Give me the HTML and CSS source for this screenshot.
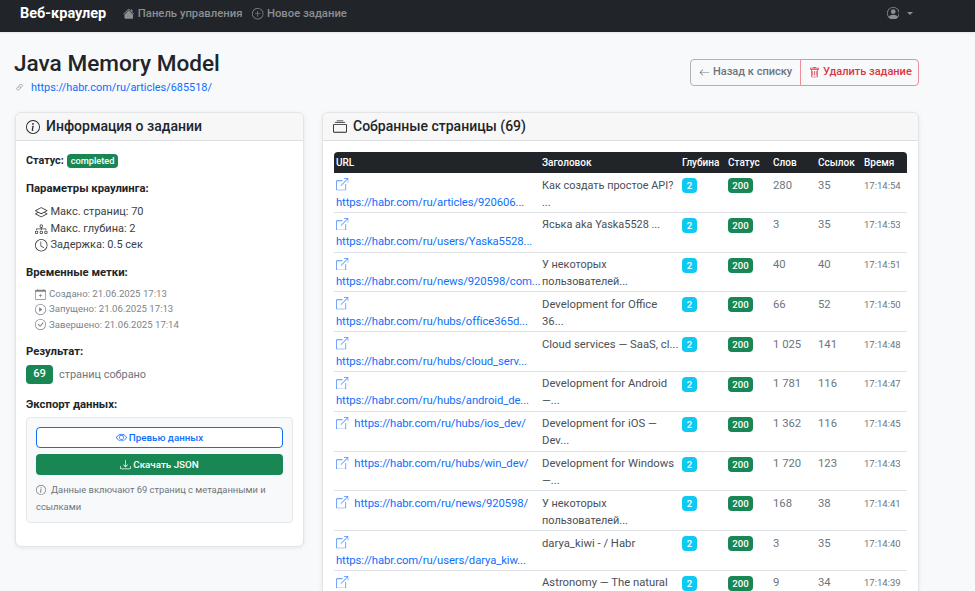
FILE: index.html
```html
<!DOCTYPE html>
<html lang="ru">
<head>
<meta charset="utf-8">
<title>Java Memory Model</title>
<link rel="stylesheet" href="styles.css">
</head>
<body>
<svg class="defs" width="0" height="0">
<symbol id="i-ext" viewBox="0 0 16 16"><path d="M8.636 3.5a.5.5 0 0 0-.5-.5H1.5A1.5 1.5 0 0 0 0 4.5v10A1.5 1.5 0 0 0 1.5 16h10a1.5 1.5 0 0 0 1.5-1.5V7.864a.5.5 0 0 0-1 0V14.5a.5.5 0 0 1-.5.5h-10a.5.5 0 0 1-.5-.5v-10a.5.5 0 0 1 .5-.5h6.636a.5.5 0 0 0 .5-.5z"/><path d="M16 .5a.5.5 0 0 0-.5-.5h-5a.5.5 0 0 0 0 1h3.793L6.146 9.146a.5.5 0 1 0 .708.708L15 1.707V5.5a.5.5 0 0 0 1 0v-5z"/></symbol>
<symbol id="i-info" viewBox="0 0 16 16"><path d="M8 15A7 7 0 1 1 8 1a7 7 0 0 1 0 14zm0 1A8 8 0 1 0 8 0a8 8 0 0 0 0 16z"/><path d="M8.93 6.588l-2.29.287-.082.38.45.083c.294.07.352.176.288.469l-.738 3.468c-.194.897.105 1.319.808 1.319.545 0 1.178-.252 1.465-.598l.088-.416c-.2.176-.492.246-.686.246-.275 0-.375-.193-.304-.533L8.93 6.588zM9 4.5a1 1 0 1 1-2 0 1 1 0 0 1 2 0z"/></symbol>
</svg>

<nav class="navbar">
  <span class="brand">Веб-краулер</span>
  <a class="nav-link"><svg class="ico" viewBox="0 0 16 16"><path d="M8.707 1.5a1 1 0 0 0-1.414 0L.646 8.146a.5.5 0 0 0 .708.708L8 2.207l6.646 6.647a.5.5 0 0 0 .708-.708L13 5.793V2.5a.5.5 0 0 0-.5-.5h-1a.5.5 0 0 0-.5.5v1.293L8.707 1.5Z"/><path d="m8 3.293 6 6V13.5a1.5 1.5 0 0 1-1.5 1.5h-9A1.5 1.5 0 0 1 2 13.5V9.293l6-6Z"/></svg>Панель управления</a>
  <a class="nav-link"><svg class="ico" viewBox="0 0 16 16"><path d="M8 15A7 7 0 1 1 8 1a7 7 0 0 1 0 14zm0 1A8 8 0 1 0 8 0a8 8 0 0 0 0 16z"/><path d="M8 4a.5.5 0 0 1 .5.5v3h3a.5.5 0 0 1 0 1h-3v3a.5.5 0 0 1-1 0v-3h-3a.5.5 0 0 1 0-1h3v-3A.5.5 0 0 1 8 4z"/></svg>Новое задание</a>
  <span class="nav-user"><svg class="ico user-ico" viewBox="0 0 16 16"><path d="M11 6a3 3 0 1 1-6 0 3 3 0 0 1 6 0z"/><path fill-rule="evenodd" d="M0 8a8 8 0 1 1 16 0A8 8 0 0 1 0 8zm8-7a7 7 0 0 0-5.468 11.37C3.242 11.226 4.805 10 8 10s4.757 1.225 5.468 2.37A7 7 0 0 0 8 1z"/></svg><span class="caret"></span></span>
</nav>

<main class="main">
  <header class="page-head">
    <div>
      <h1>Java Memory Model</h1>
      <div class="source"><svg class="ico link-ico" viewBox="0 0 16 16"><path d="M4.715 6.542 3.343 7.914a3 3 0 1 0 4.243 4.243l1.828-1.829A3 3 0 0 0 8.586 5.5L8 6.086a1.002 1.002 0 0 0-.154.199 2 2 0 0 1 .861 3.337L6.88 11.45a2 2 0 1 1-2.83-2.83l.793-.792a4.018 4.018 0 0 1-.128-1.287z"/><path d="M6.586 4.672A3 3 0 0 0 7.414 9.5l.775-.776a2 2 0 0 1-.896-3.346L9.12 3.55a2 2 0 1 1 2.83 2.83l-.793.792c.112.42.155.855.128 1.287l1.372-1.372a3 3 0 1 0-4.243-4.243L6.586 4.672z"/></svg><a class="link">https://habr.com/ru/articles/685518/</a></div>
    </div>
    <div class="btn-group">
      <a class="head-btn back"><svg class="ico" viewBox="0 0 16 16"><path d="M15 8a.5.5 0 0 0-.5-.5H2.707l3.147-3.146a.5.5 0 1 0-.708-.708l-4 4a.5.5 0 0 0 0 .708l4 4a.5.5 0 0 0 .708-.708L2.707 8.5H14.5A.5.5 0 0 0 15 8z"/></svg>Назад к списку</a>
      <a class="head-btn del"><svg class="ico" viewBox="0 0 16 16"><path d="M5.5 5.5A.5.5 0 0 1 6 6v6a.5.5 0 0 1-1 0V6a.5.5 0 0 1 .5-.5zm2.5 0a.5.5 0 0 1 .5.5v6a.5.5 0 0 1-1 0V6a.5.5 0 0 1 .5-.5zm3 .5a.5.5 0 0 0-1 0v6a.5.5 0 0 0 1 0V6z"/><path fill-rule="evenodd" d="M14.5 3a1 1 0 0 1-1 1H13v9a2 2 0 0 1-2 2H5a2 2 0 0 1-2-2V4h-.5a1 1 0 0 1-1-1V2a1 1 0 0 1 1-1H6a1 1 0 0 1 1-1h2a1 1 0 0 1 1 1h3.5a1 1 0 0 1 1 1v1zM4.118 4 4 4.059V13a1 1 0 0 0 1 1h6a1 1 0 0 0 1-1V4.059L11.882 4H4.118zM2.5 3V2h11v1h-11z"/></svg>Удалить задание</a>
    </div>
  </header>

  <div class="columns">
    <section class="card info-card">
      <h2 class="card-header"><svg class="ico h-ico"><use href="#i-info"/></svg>Информация о задании</h2>
      <div class="card-body">
        <p class="status-line"><b>Статус:</b> <span class="pill-completed">completed</span></p>
        <h3 class="label">Параметры краулинга:</h3>
        <ul class="params">
          <li><svg class="ico" viewBox="0 0 16 16"><path d="M8.235 1.559a.5.5 0 0 0-.47 0l-7.5 4a.5.5 0 0 0 0 .882L3.188 8 .264 9.559a.5.5 0 0 0 0 .882l7.5 4a.5.5 0 0 0 .47 0l7.5-4a.5.5 0 0 0 0-.882L12.813 8l2.922-1.559a.5.5 0 0 0 0-.882l-7.5-4zm3.515 7.008L14.438 10 8 13.433 1.562 10 4.25 8.567l3.515 1.874a.5.5 0 0 0 .47 0l3.515-1.874zM8 9.433 1.562 6 8 2.567 14.438 6 8 9.433z"/></svg>Макс. страниц: 70</li>
          <li><svg class="ico" viewBox="0 0 16 16"><path fill-rule="evenodd" d="M6 3.5A1.5 1.5 0 0 1 7.5 2h1A1.5 1.5 0 0 1 10 3.5v1A1.5 1.5 0 0 1 8.5 6v1H14a.5.5 0 0 1 .5.5v1a.5.5 0 0 1-1 0V8h-5v.5a.5.5 0 0 1-1 0V8h-5v.5a.5.5 0 0 1-1 0v-1A.5.5 0 0 1 2 7h5.5V6A1.5 1.5 0 0 1 6 4.5v-1zM8.5 5a.5.5 0 0 0 .5-.5v-1a.5.5 0 0 0-.5-.5h-1a.5.5 0 0 0-.5.5v1a.5.5 0 0 0 .5.5h1zM0 11.5A1.5 1.5 0 0 1 1.5 10h1A1.5 1.5 0 0 1 4 11.5v1A1.5 1.5 0 0 1 2.5 14h-1A1.5 1.5 0 0 1 0 12.5v-1zm1.5-.5a.5.5 0 0 0-.5.5v1a.5.5 0 0 0 .5.5h1a.5.5 0 0 0 .5-.5v-1a.5.5 0 0 0-.5-.5h-1zm4.5.5A1.5 1.5 0 0 1 7.5 10h1a1.5 1.5 0 0 1 1.5 1.5v1A1.5 1.5 0 0 1 8.5 14h-1A1.5 1.5 0 0 1 6 12.5v-1zm1.5-.5a.5.5 0 0 0-.5.5v1a.5.5 0 0 0 .5.5h1a.5.5 0 0 0 .5-.5v-1a.5.5 0 0 0-.5-.5h-1zm4.5.5a1.5 1.5 0 0 1 1.5-1.5h1a1.5 1.5 0 0 1 1.5 1.5v1a1.5 1.5 0 0 1-1.5 1.5h-1a1.5 1.5 0 0 1-1.5-1.5v-1zm1.5-.5a.5.5 0 0 0-.5.5v1a.5.5 0 0 0 .5.5h1a.5.5 0 0 0 .5-.5v-1a.5.5 0 0 0-.5-.5h-1z"/></svg>Макс. глубина: 2</li>
          <li><svg class="ico" viewBox="0 0 16 16"><path d="M8 3.5a.5.5 0 0 0-1 0V9a.5.5 0 0 0 .252.434l3.5 2a.5.5 0 0 0 .496-.868L8 8.71V3.5z"/><path d="M8 16A8 8 0 1 0 8 0a8 8 0 0 0 0 16zm7-8A7 7 0 1 1 1 8a7 7 0 0 1 14 0z"/></svg>Задержка: 0.5 сек</li>
        </ul>
        <h3 class="label">Временные метки:</h3>
        <ul class="times">
          <li><svg class="ico" viewBox="0 0 16 16"><path d="M8 7a.5.5 0 0 1 .5.5V9H10a.5.5 0 0 1 0 1H8.5v1.5a.5.5 0 0 1-1 0V10H6a.5.5 0 0 1 0-1h1.5V7.5A.5.5 0 0 1 8 7z"/><path d="M3.5 0a.5.5 0 0 1 .5.5V1h8V.5a.5.5 0 0 1 1 0V1h1a2 2 0 0 1 2 2v11a2 2 0 0 1-2 2H2a2 2 0 0 1-2-2V3a2 2 0 0 1 2-2h1V.5a.5.5 0 0 1 .5-.5zM1 4v10a1 1 0 0 0 1 1h12a1 1 0 0 0 1-1V4H1z"/></svg>Создано: 21.06.2025 17:13</li>
          <li><svg class="ico" viewBox="0 0 16 16"><path d="M8 15A7 7 0 1 1 8 1a7 7 0 0 1 0 14zm0 1A8 8 0 1 0 8 0a8 8 0 0 0 0 16z"/><path d="M6.271 5.055a.5.5 0 0 1 .52.038l3.5 2.5a.5.5 0 0 1 0 .814l-3.5 2.5A.5.5 0 0 1 6 10.5v-5a.5.5 0 0 1 .271-.445z"/></svg>Запущено: 21.06.2025 17:13</li>
          <li><svg class="ico" viewBox="0 0 16 16"><path d="M8 15A7 7 0 1 1 8 1a7 7 0 0 1 0 14zm0 1A8 8 0 1 0 8 0a8 8 0 0 0 0 16z"/><path d="M10.97 4.97a.235.235 0 0 0-.02.022L7.477 9.417 5.384 7.323a.75.75 0 0 0-1.06 1.06L6.97 11.03a.75.75 0 0 0 1.079-.02l3.992-4.99a.75.75 0 0 0-1.071-1.05z"/></svg>Завершено: 21.06.2025 17:14</li>
        </ul>
        <h3 class="label result-label">Результат:</h3>
        <div class="result"><span class="count">69</span><span class="result-text">страниц собрано</span></div>
        <h3 class="label export-label">Экспорт данных:</h3>
        <div class="export">
          <a class="btn btn-outline"><svg class="ico" viewBox="0 0 16 16"><path d="M16 8s-3-5.5-8-5.5S0 8 0 8s3 5.5 8 5.5S16 8 16 8zM1.173 8a13.133 13.133 0 0 1 1.66-2.043C4.12 4.668 5.88 3.5 8 3.5c2.12 0 3.879 1.168 5.168 2.457A13.133 13.133 0 0 1 14.828 8c-.058.087-.122.183-.195.288-.335.48-.83 1.12-1.465 1.755C11.879 11.332 10.119 12.5 8 12.5c-2.12 0-3.879-1.168-5.168-2.457A13.134 13.134 0 0 1 1.172 8z"/><path d="M8 5.5a2.5 2.5 0 1 0 0 5 2.5 2.5 0 0 0 0-5zM4.5 8a3.5 3.5 0 1 1 7 0 3.5 3.5 0 0 1-7 0z"/></svg>Превью данных</a>
          <a class="btn btn-green"><svg class="ico" viewBox="0 0 16 16"><path d="M.5 9.9a.5.5 0 0 1 .5.5v2.5a1 1 0 0 0 1 1h12a1 1 0 0 0 1-1v-2.5a.5.5 0 0 1 1 0v2.5a2 2 0 0 1-2 2H2a2 2 0 0 1-2-2v-2.5a.5.5 0 0 1 .5-.5z"/><path d="M7.646 11.854a.5.5 0 0 0 .708 0l3-3a.5.5 0 0 0-.708-.708L8.5 10.293V1.5a.5.5 0 0 0-1 0v8.793L5.354 8.146a.5.5 0 1 0-.708.708l3 3z"/></svg>Скачать JSON</a>
          <p class="note"><svg class="ico note-ico"><use href="#i-info"/></svg>Данные включают 69 страниц с метаданными и ссылками</p>
        </div>
      </div>
    </section>

    <section class="card pages-card">
      <h2 class="card-header"><svg class="ico h-ico" viewBox="0 0 16 16"><path fill-rule="evenodd" d="M2.5 3.5a.5.5 0 0 1 0-1h11a.5.5 0 0 1 0 1h-11zm2-2a.5.5 0 0 1 0-1h7a.5.5 0 0 1 0 1h-7zM0 13a1.5 1.5 0 0 0 1.5 1.5h13A1.5 1.5 0 0 0 16 13V6a1.5 1.5 0 0 0-1.5-1.5h-13A1.5 1.5 0 0 0 0 6v7zm1.5.5A.5.5 0 0 1 1 13V6a.5.5 0 0 1 .5-.5h13a.5.5 0 0 1 .5.5v7a.5.5 0 0 1-.5.5h-13z"/></svg>Собранные страницы (69)</h2>
      <div class="card-body table-body">
        <table class="pages">
          <colgroup><col class="c-url"><col class="c-title"><col class="c-depth"><col class="c-status"><col class="c-words"><col class="c-links"><col class="c-time"></colgroup>
          <thead><tr><th>URL</th><th>Заголовок</th><th>Глубина</th><th>Статус</th><th>Слов</th><th>Ссылок</th><th>Время</th></tr></thead>
          <tbody>
            <tr><td><svg class="ico ext"><use href="#i-ext"/></svg> <a class="link url">https://habr.com/ru/articles/920606...</a></td><td class="cy">Как создать простое API?<br>...</td><td><span class="b-depth">2</span></td><td><span class="b-code">200</span></td><td class="num">280</td><td class="num">35</td><td class="time">17:14:54</td></tr>
            <tr><td><svg class="ico ext"><use href="#i-ext"/></svg> <a class="link url">https://habr.com/ru/users/Yaska5528...</a></td><td class="cy">Яська aka Yaska5528 ...</td><td><span class="b-depth">2</span></td><td><span class="b-code">200</span></td><td class="num">3</td><td class="num">35</td><td class="time">17:14:53</td></tr>
            <tr><td><svg class="ico ext"><use href="#i-ext"/></svg> <a class="link url">https://habr.com/ru/news/920598/com...</a></td><td class="cy">У некоторых<br>пользователей...</td><td><span class="b-depth">2</span></td><td><span class="b-code">200</span></td><td class="num">40</td><td class="num">40</td><td class="time">17:14:51</td></tr>
            <tr><td><svg class="ico ext"><use href="#i-ext"/></svg> <a class="link url">https://habr.com/ru/hubs/office365d...</a></td><td>Development for Office<br>36...</td><td><span class="b-depth">2</span></td><td><span class="b-code">200</span></td><td class="num">66</td><td class="num">52</td><td class="time">17:14:50</td></tr>
            <tr><td><svg class="ico ext"><use href="#i-ext"/></svg> <a class="link url">https://habr.com/ru/hubs/cloud_serv...</a></td><td>Cloud services — SaaS, cl...</td><td><span class="b-depth">2</span></td><td><span class="b-code">200</span></td><td class="num">1 025</td><td class="num">141</td><td class="time">17:14:48</td></tr>
            <tr><td><svg class="ico ext"><use href="#i-ext"/></svg> <a class="link url">https://habr.com/ru/hubs/android_de...</a></td><td>Development for Android<br>—...</td><td><span class="b-depth">2</span></td><td><span class="b-code">200</span></td><td class="num">1 781</td><td class="num">116</td><td class="time">17:14:47</td></tr>
            <tr><td><svg class="ico ext"><use href="#i-ext"/></svg> <a class="link">https://habr.com/ru/hubs/ios_dev/</a></td><td>Development for iOS —<br>Dev...</td><td><span class="b-depth">2</span></td><td><span class="b-code">200</span></td><td class="num">1 362</td><td class="num">116</td><td class="time">17:14:45</td></tr>
            <tr><td><svg class="ico ext"><use href="#i-ext"/></svg> <a class="link">https://habr.com/ru/hubs/win_dev/</a></td><td>Development for Windows<br>—...</td><td><span class="b-depth">2</span></td><td><span class="b-code">200</span></td><td class="num">1 720</td><td class="num">123</td><td class="time">17:14:43</td></tr>
            <tr><td><svg class="ico ext"><use href="#i-ext"/></svg> <a class="link">https://habr.com/ru/news/920598/</a></td><td class="cy">У некоторых<br>пользователей...</td><td><span class="b-depth">2</span></td><td><span class="b-code">200</span></td><td class="num">168</td><td class="num">38</td><td class="time">17:14:41</td></tr>
            <tr><td><svg class="ico ext"><use href="#i-ext"/></svg> <a class="link url">https://habr.com/ru/users/darya_kiw...</a></td><td>darya_kiwi - / Habr</td><td><span class="b-depth">2</span></td><td><span class="b-code">200</span></td><td class="num">3</td><td class="num">35</td><td class="time">17:14:40</td></tr>
            <tr><td><svg class="ico ext"><use href="#i-ext"/></svg></td><td>Astronomy — The natural</td><td><span class="b-depth">2</span></td><td><span class="b-code">200</span></td><td class="num">9</td><td class="num">34</td><td class="time">17:14:39</td></tr>
          </tbody>
        </table>
      </div>
    </section>
  </div>
</main>
</body>
</html>
```

FILE: styles.css
```css
* { box-sizing: border-box; }
html, body { height: 100%; overflow: hidden; }
body {
  margin: 0;
  background: #f8f9fa;
  color: #212529;
  font-family: Roboto, "Noto Sans", "Liberation Sans", sans-serif;
  font-size: 12px;
  line-height: 1.5;
}
.defs { position: absolute; }
.ico { width: 1em; height: 1em; fill: currentColor; flex: none; vertical-align: -0.125em; }

.navbar {
  height: 32px;
  background: #212529;
  display: flex;
  align-items: center;
  padding: 0 62px 4px 20px;
  color: #8c8f92;
  box-shadow: 0 1px 2px rgba(0,0,0,.08);
}
.brand { color: #fff; font-size: 14.5px; font-weight: 700; margin-right: 17px; }
.nav-link { font-size: 11.3px; font-weight: 500; margin-right: 10px; display: flex; align-items: center; }
.nav-link .ico { margin-right: 3px; font-size: 11.5px; }
.nav-user { margin-left: auto; display: flex; align-items: center; margin-bottom: 2px; }
.user-ico { font-size: 12.5px; }
.caret { margin-left: 8px; border-top: 3px solid #8c8f92; border-left: 3px solid transparent; border-right: 3px solid transparent; }

.main { padding: 0 56px 0 15px; }
.page-head { display: flex; justify-content: space-between; padding-top: 17px; height: 80px; }
h1 { margin: 0 0 0 -1px; font-size: 22.6px; font-weight: 500; line-height: 30px; }
.source { font-size: 10.9px; line-height: 17px; display: flex; align-items: center; }
.link-ico { color: #8a8f94; font-size: 9px; margin: 0 7px 0 0; }
.link { color: #0d6efd; }

.btn-group { display: flex; height: 27px; margin-top: 10px; }
.head-btn { display: flex; align-items: center; font-size: 11px; font-weight: 500; padding: 0 8px; border: 1px solid; background: transparent; white-space: nowrap; }
.head-btn .ico { margin-right: 3px; font-size: 11px; }
.back { color: #6c757d; border-color: #adb2b7; border-radius: 4px 0 0 4px; width: 111px; }
.del { color: #dc3545; border-color: #ec8f99; border-radius: 0 4px 4px 0; width: 119px; margin-left: -1px; }

.columns { display: grid; grid-template-columns: 289px 597px; gap: 18px; align-items: start; }
.card { background: #fff; border: 1px solid #e3e4e6; border-radius: 6px; box-shadow: 0 1px 4px rgba(0,0,0,.08); }
.card-header { margin: 0; height: 28px; display: flex; align-items: center; padding: 0 10px; background: #f7f7f7; border-bottom: 1px solid #dedfe1; border-radius: 6px 6px 0 0; font-size: 14px; font-weight: 500; }
.h-ico { font-size: 14px; margin-right: 6px; }

.card-body { padding: 11px 10px 0; }
.info-card { height: 435px; }
.status-line { margin: 0; display: flex; align-items: center; gap: 3px; height: 18px; font-size: 10.8px; }
.status-line b { font-weight: 700; }
.pill-completed { background: #198754; color: #fff; font-size: 9.2px; font-weight: 500; border-radius: 4px; padding: 0 4px; line-height: 14px; }
.label { margin: 10px 0 0; font-size: 11.3px; font-weight: 700; line-height: 18px; }
.params, .times { list-style: none; margin: 0; }
.params { padding: 6px 0 0 9px; font-size: 11px; }
.params li { height: 16.6px; line-height: 16.6px; display: flex; align-items: center; color: #3a3f44; }
.params .ico { margin-right: 3px; font-size: 12.5px; }
.times { padding: 5px 0 0 9px; font-size: 9.6px; color: #7d848a; }
.times li { height: 15.2px; display: flex; align-items: center; }
.times .ico { margin-right: 3px; font-size: 11px; }
.result-label { margin-top: 11px; }
.result { display: flex; align-items: center; margin-top: 4px; }
.count { width: 27px; height: 19px; background: #198754; color: #fff; border-radius: 4px; font-size: 11.2px; font-weight: 500; display: flex; align-items: center; justify-content: center; }
.result-text { margin-left: 6px; color: #6c757d; font-size: 10.9px; }
.export-label { margin-top: 12px; }
.export { margin-top: 3px; background: #f8f9fa; border: 1px solid #e6e7e9; border-radius: 4px; height: 106px; padding: 9px; }
.btn { display: flex; align-items: center; justify-content: center; height: 21px; border-radius: 4px; font-size: 9.8px; font-weight: 500; }
.btn .ico { margin-right: 2px; font-size: 11px; }
.btn-outline { color: #0d6efd; border: 1px solid #0d6efd; background: #fff; }
.btn-green { margin-top: 6px; background: #198754; color: #fff; }
.note { margin: 6px 0 0; font-size: 9.4px; line-height: 17px; color: #6c757d; }
.note-ico { font-size: 10px; margin-right: 5px; vertical-align: -1.5px; }

.table-body { padding: 11px 11px 0; }
.pages { width: 573px; border-collapse: separate; border-spacing: 0; table-layout: fixed; }
.c-url { width: 206px; } .c-title { width: 140px; } .c-depth { width: 46px; } .c-status { width: 45px; }
.c-words { width: 45px; } .c-links { width: 46px; } .c-time { width: 45px; }
.pages th { background: #212529; color: #fff; height: 21px; padding: 0 2px; font-size: 10px; font-weight: 500; text-align: left; white-space: nowrap; }
.pages th:first-child { border-top-left-radius: 4px; }
.pages th:last-child { border-top-right-radius: 4px; }
.pages td { height: 39.8px; padding: 3.5px 2px 0; border-bottom: 1px solid #dee2e6; vertical-align: top; font-size: 11.3px; line-height: 17px; color: #495057; white-space: nowrap; }
.pages td.cy { font-size: 10.9px; }
.pages td .ext { font-size: 12.5px; color: #4d8dfd; margin-right: 3px; vertical-align: -2px; }
.pages td .link { font-size: 11.3px; letter-spacing: -.1px; white-space: nowrap; }
.url { display: block; }
.num { color: #6c757d !important; }
.pages .time { font-size: 9.5px; color: #6c757d; }
.b-depth, .b-code { display: inline-block; color: #fff; font-size: 9.6px; font-weight: 500; line-height: 15px; margin-top: 1.5px; text-align: center; }
.b-depth { width: 15px; background: #0dcaf0; border-radius: 4px; }
.b-code { width: 25px; background: #198754; border-radius: 4px; }
```
